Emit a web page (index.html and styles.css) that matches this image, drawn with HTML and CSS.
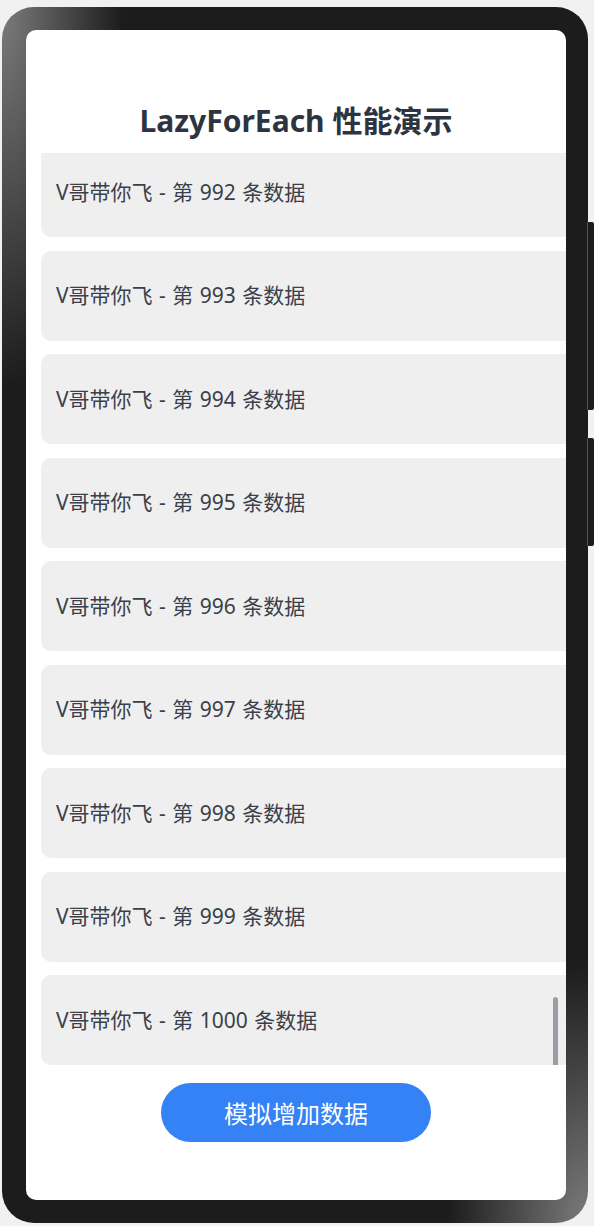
FILE: index.html
```html
<!DOCTYPE html>
<html lang="zh">
<head>
    <meta charset="UTF-8">
    <title>LazyForEach 性能演示</title>
    <link rel="stylesheet" href="styles.css">
</head>
<body>

<div class="phone">
    <!-- 侧边按键 -->
    <div class="side-key key-volume"></div>
    <div class="side-key key-power"></div>

    <div class="screen">
        <h1 class="title">LazyForEach 性能演示</h1>

        <div class="list-wrap">
            <div class="list">
                <div class="list-item">V哥带你飞 - 第 992 条数据</div>
                <div class="list-item">V哥带你飞 - 第 993 条数据</div>
                <div class="list-item">V哥带你飞 - 第 994 条数据</div>
                <div class="list-item">V哥带你飞 - 第 995 条数据</div>
                <div class="list-item">V哥带你飞 - 第 996 条数据</div>
                <div class="list-item">V哥带你飞 - 第 997 条数据</div>
                <div class="list-item">V哥带你飞 - 第 998 条数据</div>
                <div class="list-item">V哥带你飞 - 第 999 条数据</div>
                <div class="list-item">V哥带你飞 - 第 1000 条数据</div>
            </div>
            <div class="scrollbar"></div>
        </div>

        <div class="actions">
            <button class="add-btn" type="button">模拟增加数据</button>
        </div>
    </div>
</div>

</body>
</html>
```

FILE: styles.css
```css
/* 页面与手机外壳 */
body {
    margin: 0;
    padding: 0;
    background-color: #f1f1f1;
    font-family: "Noto Sans", "Noto Sans CJK SC", sans-serif;
}

.phone {
    position: relative;
    width: 540px;
    margin: 7px 0 0 2px;
    padding: 23px 22px 23px 24px;
    border-radius: 32px;
    background-color: #1c1c1c;
    background-image:
        radial-gradient(120px 380px at 0 0, #7c7c7c, rgba(28, 28, 28, 0)),
        radial-gradient(140px 260px at 100% 100%, #7c7c7c, rgba(28, 28, 28, 0));
}

.side-key {
    position: absolute;
    right: -6px;
    width: 6px;
    background-color: #1c1c1c;
    border-left: 1px solid #555;
    border-radius: 0 2px 2px 0;
}

.key-volume {
    top: 215px;
    height: 188px;
}

.key-power {
    top: 431px;
    height: 108px;
}

.screen {
    height: 1170px;
    background-color: #fff;
    border-radius: 10px;
    overflow: hidden;
    display: flex;
    flex-direction: column;
}

/* 标题 */
.title {
    margin: 0;
    padding-top: 74px;
    line-height: 34px;
    font-size: 30px;
    font-weight: bold;
    text-align: center;
    color: #2d3440;
}

/* 列表 */
.list-wrap {
    position: relative;
    margin-top: 15px;
    height: 912px;
    overflow: hidden;
}

.list {
    height: 100%;
    padding-left: 15px;
    display: flex;
    flex-direction: column;
    justify-content: flex-end;
    gap: 13.5px;
}

.list-item {
    flex-shrink: 0;
    width: calc(100% + 12px);
    height: 90px;
    box-sizing: border-box;
    padding: 0 0 3px 15px;
    display: flex;
    align-items: center;
    background-color: #efefef;
    border-radius: 10px;
    font-size: 21px;
    word-spacing: 1px;
    color: #3a404b;
}

.scrollbar {
    position: absolute;
    right: 8px;
    top: 844px;
    width: 5px;
    height: 70px;
    border-radius: 3px;
    background-color: #9d9ea5;
}

/* 底部按钮 */
.actions {
    display: flex;
    justify-content: center;
    margin-top: 18px;
}

.add-btn {
    width: 270px;
    height: 59px;
    border: none;
    border-radius: 30px;
    background-color: #3482f5;
    color: #fff;
    font-family: "Noto Sans", "Noto Sans CJK SC", sans-serif;
    font-size: 24px;
    cursor: pointer;
}
```
